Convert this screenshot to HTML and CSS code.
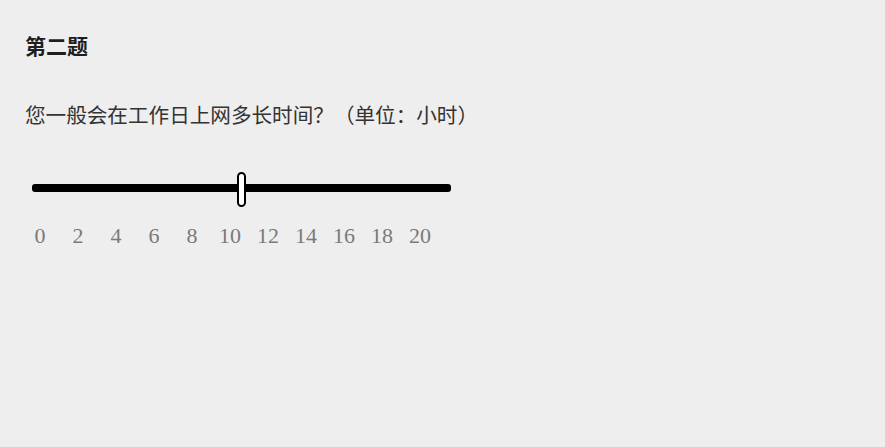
FILE: index.html
```html
<!DOCTYPE html>
<html lang="zh-CN">
<head>
<meta charset="utf-8">
<link rel="stylesheet" href="styles.css">
</head>
<body>
<div class="page">
  <h2 class="title">第二题</h2>
  <p class="question">您一般会在工作日上网多长时间？（单位：小时）</p>
  <div class="slider">
    <div class="track"></div>
    <div class="thumb" style="left: 205px"></div>
  </div>
  <div class="labels">
    <span>0</span><span>2</span><span>4</span><span>6</span><span>8</span><span>10</span><span>12</span><span>14</span><span>16</span><span>18</span><span>20</span>
  </div>
</div>
</body>
</html>
```
FILE: styles.css
```css
html, body {
  margin: 0;
  padding: 0;
  background: #eeeeee;
}
.page {
  padding: 33px 0 0 25px;
  font-family: "Noto Sans CJK SC", "Noto Sans", sans-serif;
}
.title {
  margin: 0;
  font-size: 21px;
  line-height: 24px;
  font-weight: bold;
  color: #1e1e1e;
}
.question {
  margin: 45px 0 0 0;
  font-size: 20.6px;
  line-height: 24px;
  color: #333333;
}
.slider {
  position: relative;
  margin: 46px 0 0 7px;
  width: 419px;
  height: 36px;
}
.track {
  position: absolute;
  left: 0;
  right: 0;
  top: 12px;
  height: 8px;
  background: #000;
  border-radius: 3px;
}
.thumb {
  position: absolute;
  top: 0;
  width: 5px;
  height: 31px;
  background: #fff;
  border: 2px solid #000;
  border-radius: 5px;
}
.labels {
  display: flex;
  margin: 16px 0 0 -4px;
  font-family: "Liberation Serif", serif;
  font-size: 22px;
  line-height: 24px;
  color: #7a7a7a;
}
.labels span {
  width: 38px;
  text-align: center;
}
```
